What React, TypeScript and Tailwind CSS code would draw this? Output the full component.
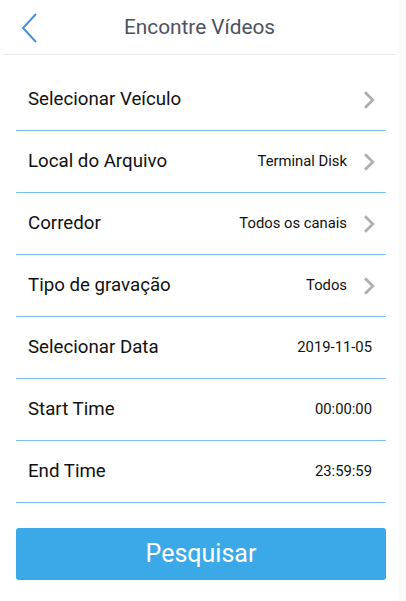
import React from "react";

const rows: { label: string; value?: string; chevron: boolean }[] = [
  { label: "Selecionar Veículo", chevron: true },
  { label: "Local do Arquivo", value: "Terminal Disk", chevron: true },
  { label: "Corredor", value: "Todos os canais", chevron: true },
  { label: "Tipo de gravação", value: "Todos", chevron: true },
  { label: "Selecionar Data", value: "2019-11-05", chevron: false },
  { label: "Start Time", value: "00:00:00", chevron: false },
  { label: "End Time", value: "23:59:59", chevron: false },
];

function Chevron() {
  return (
    <svg width="12" height="18" viewBox="0 0 12 18" className="ml-[16px] mr-[11px]">
      <path d="M2 1.2 L9.8 9 L2 16.8" fill="none" stroke="#b0b0b0" strokeWidth="2.8" />
    </svg>
  );
}

export default function App() {
  return (
    <div
      className="w-[406px] h-[601px] bg-white flex"
      style={{ fontFamily: "Roboto, 'Noto Sans', sans-serif" }}
    >
      <div className="w-[399px] flex flex-col">
        <div className="h-[55px] mx-[3px] border-b border-[#ebebeb] relative flex items-center justify-center">
          <svg width="20" height="32" viewBox="0 0 20 32" className="absolute left-[17px] top-[12px]">
            <path d="M16 2 L3 16 L16 30" fill="none" stroke="#4a90dc" strokeWidth="2" />
          </svg>
          <span className="text-[20.8px] text-[#4b5263] mt-[1px]">Encontre Vídeos</span>
        </div>
        <div className="mt-[14px] ml-[16px] mr-[13px] flex flex-col">
          {rows.map((r) => (
            <div
              key={r.label}
              className="h-[62px] border-b border-[#7cc2ea] flex items-center justify-between pl-[12px]"
            >
              <span className="text-[18.7px] text-[#111]">{r.label}</span>
              <div className="flex items-center">
                {r.value && (
                  <span className={`text-[14.8px] text-[#111] ${r.chevron ? "" : "mr-[14px]"}`}>
                    {r.value}
                  </span>
                )}
                {r.chevron && <Chevron />}
              </div>
            </div>
          ))}
        </div>
        <div className="mt-[25px] ml-[16px] mr-[13px] h-[52px] rounded-[3px] bg-[#3ba9e8] flex items-center justify-center">
          <span className="text-[25px] text-white">Pesquisar</span>
        </div>
      </div>
      <div className="w-[7px] bg-[#fafafa]" />
    </div>
  );
}
